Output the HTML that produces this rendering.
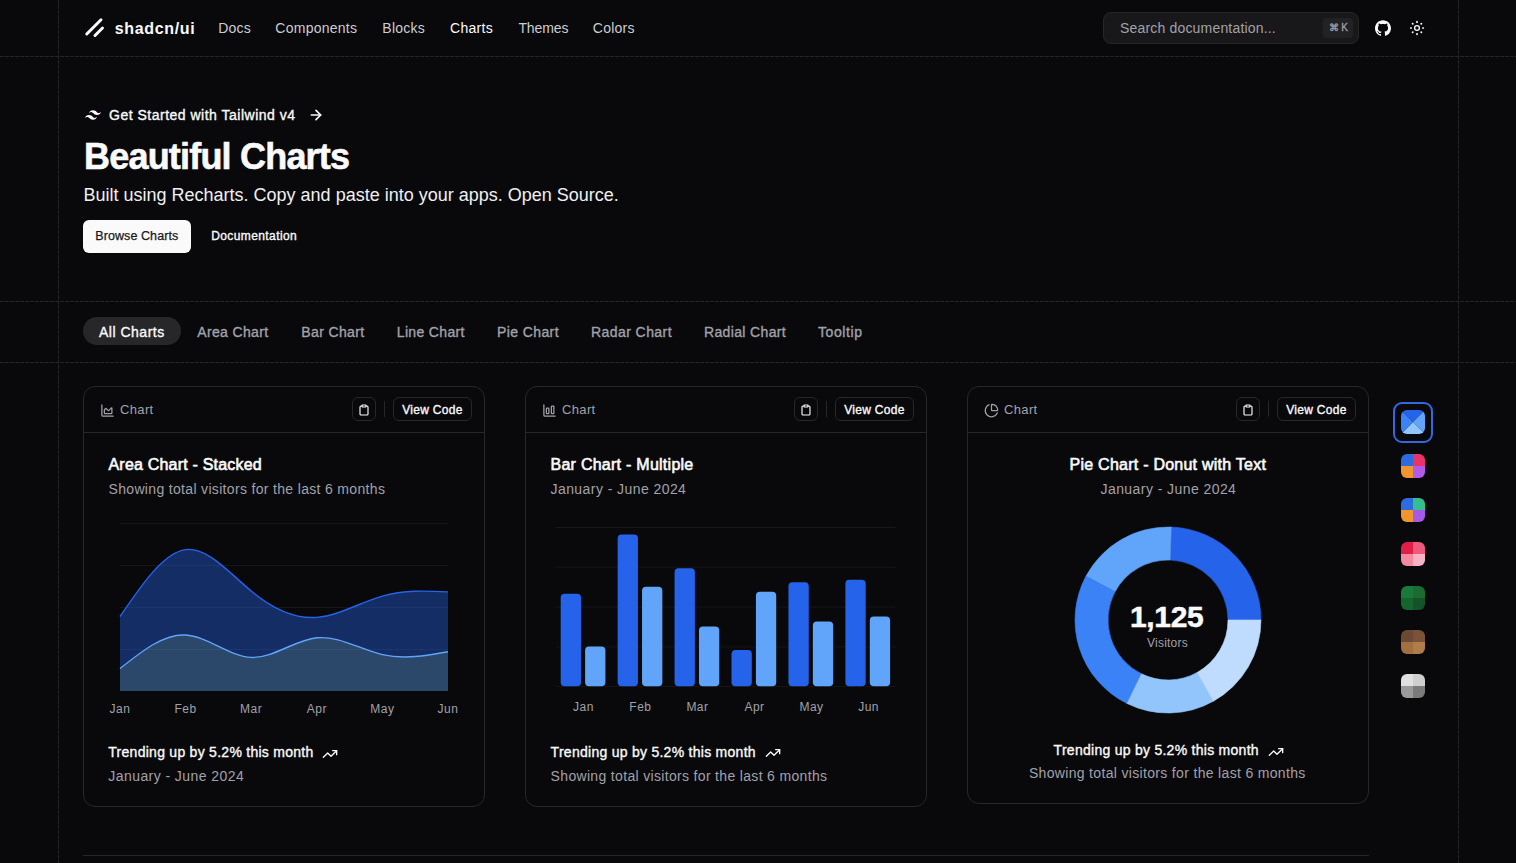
<!DOCTYPE html>
<html><head><meta charset="utf-8"><title>Beautiful Charts</title>
<style>
*{box-sizing:border-box;margin:0;padding:0}
html,body{width:1516px;height:863px;overflow:hidden;background:#09090b}
body{position:relative;font-family:"Liberation Sans",sans-serif;color:#fafafa}
.a{position:absolute;white-space:nowrap;line-height:1}
.med{font-weight:400;-webkit-text-stroke:0.35px currentColor}
.vl{position:absolute;top:0;bottom:0;width:1px;background:repeating-linear-gradient(to bottom,#252528 0 4px,transparent 4px 5px)}
.hl{position:absolute;left:0;right:0;height:1px;background:repeating-linear-gradient(to right,#252528 0 4px,transparent 4px 5px)}
.nav{font-size:14px;color:#cdcdd1}
svg{position:absolute;overflow:visible}
.card{position:absolute;top:386px;width:402px;border:1px solid #27272a;border-radius:12px}
.chd{position:absolute;left:0;right:0;top:45px;height:1px;background:#27272a}
.btn{position:absolute;top:397px;height:24px;border:1px solid #27272a;border-radius:6px}
.ttl{font-size:16px;font-weight:400;-webkit-text-stroke:0.6px #fafafa}
.desc{font-size:14px;color:#a1a1aa}
.axl{width:60px;text-align:center;font-size:12px;color:#a1a1aa;letter-spacing:0.5px}
.ft1{font-size:14px}
</style></head><body>
<div class="vl" style="left:58px"></div><div class="vl" style="left:1458px"></div>
<div class="hl" style="top:56px"></div><div class="hl" style="top:301px"></div><div class="hl" style="top:362px"></div>
<svg style="left:82.5px;top:16.3px" width="24" height="24" viewBox="0 0 256 256"><line x1="208" y1="128" x2="128" y2="208" stroke="#fafafa" stroke-width="32" stroke-linecap="round"/><line x1="192" y1="40" x2="40" y2="192" stroke="#fafafa" stroke-width="32" stroke-linecap="round"/></svg>
<div class="a " style="left:114.8px;top:20.5px;font-size:16px;font-weight:700;letter-spacing:0.65px">shadcn/ui</div>
<div class="a nav" style="left:218.3px;top:20.6px;letter-spacing:0.15px;">Docs</div>
<div class="a nav" style="left:275.3px;top:20.6px;letter-spacing:0.26px;">Components</div>
<div class="a nav" style="left:382.3px;top:20.6px;letter-spacing:0.26px;">Blocks</div>
<div class="a nav" style="left:450px;top:20.6px;letter-spacing:0.3px;color:#fafafa;">Charts</div>
<div class="a nav" style="left:518.4px;top:20.6px;letter-spacing:-0.1px;">Themes</div>
<div class="a nav" style="left:592.8px;top:20.6px;letter-spacing:0.24px;">Colors</div>
<div style="position:absolute;left:1103px;top:12px;width:256px;height:32px;border-radius:8px;background:#18181b;border:1px solid #262629"></div>
<div class="a " style="left:1120px;top:20.8px;font-size:14px;color:#a1a1aa;letter-spacing:0.18px">Search documentation...</div>
<div style="position:absolute;left:1323px;top:18px;width:30px;height:20px;border-radius:4px;background:#222225"></div>
<div class="a " style="left:1328.5px;top:23.3px;font-size:10px;color:#a1a1aa;-webkit-text-stroke:0.3px #a1a1aa">⌘ K</div>
<svg style="left:1375px;top:20px" width="16" height="16" viewBox="0 0 24 24"><path fill="#fafafa" d="M12 .297c-6.63 0-12 5.373-12 12 0 5.303 3.438 9.8 8.205 11.385.6.113.82-.258.82-.577 0-.285-.01-1.04-.015-2.04-3.338.724-4.042-1.61-4.042-1.61C4.422 18.07 3.633 17.7 3.633 17.7c-1.087-.744.084-.729.084-.729 1.205.084 1.838 1.236 1.838 1.236 1.07 1.835 2.809 1.305 3.495.998.108-.776.417-1.305.76-1.605-2.665-.3-5.466-1.332-5.466-5.93 0-1.31.465-2.38 1.235-3.22-.135-.303-.54-1.523.105-3.176 0 0 1.005-.322 3.3 1.23.96-.267 1.98-.399 3-.405 1.02.006 2.04.138 3 .405 2.28-1.552 3.285-1.23 3.285-1.23.645 1.653.24 2.873.12 3.176.765.84 1.23 1.91 1.23 3.22 0 4.61-2.805 5.625-5.475 5.92.42.36.81 1.096.81 2.22 0 1.606-.015 2.896-.015 3.286 0 .315.21.69.825.57C20.565 22.092 24 17.592 24 12.297c0-6.627-5.373-12-12-12"/></svg>
<svg style="left:1409px;top:20px" width="16" height="16" viewBox="0 0 24 24" fill="none" stroke="#fafafa" stroke-width="2" stroke-linecap="round"><circle cx="12" cy="12" r="3.6"/><path d="M12 2.6v.6M12 20.8v.6M5.35 5.35l.4.4M18.25 18.25l.4.4M2.6 12h.6M20.8 12h.6M5.35 18.65l.4-.4M18.25 5.75l.4-.4" stroke-width="2.6"/></svg>
<svg style="left:85px;top:107px" width="16" height="16" viewBox="0 0 24 24"><path fill="#fafafa" d="M12.001,4.8c-3.2,0-5.2,1.6-6,4.8c1.2-1.6,2.6-2.2,4.2-1.8c0.913,0.228,1.565,0.89,2.288,1.624C13.666,10.618,15.027,12,18.001,12c3.2,0,5.2-1.6,6-4.8c-1.2,1.6-2.6,2.2-4.2,1.8c-0.913-0.228-1.565-0.89-2.288-1.624C16.337,6.182,14.976,4.8,12.001,4.8z M6.001,12c-3.2,0-5.2,1.6-6,4.8c1.2-1.6,2.6-2.2,4.2-1.8c0.913,0.228,1.565,0.89,2.288,1.624c1.177,1.194,2.538,2.576,5.512,2.576c3.2,0,5.2-1.6,6-4.8c-1.2,1.6-2.6,2.2-4.2,1.8c-0.913-0.228-1.565-0.89-2.288-1.624C10.337,13.382,8.976,12,6.001,12z"/></svg>
<div class="a med" style="left:109px;top:108.2px;font-size:14px;letter-spacing:0.5px">Get Started with Tailwind v4</div>
<svg style="left:308px;top:107.3px" width="16" height="16" viewBox="0 0 24 24" fill="none" stroke="#fafafa" stroke-width="2.5" stroke-linecap="round" stroke-linejoin="round"><path d="M5 12h14"/><path d="m12 5 7 7-7 7"/></svg>
<div class="a " style="left:84px;top:138.5px;font-size:36px;font-weight:700;letter-spacing:-0.8px;-webkit-text-stroke:0.6px #fafafa">Beautiful Charts</div>
<div class="a " style="left:83.5px;top:185.5px;font-size:18px;color:#f0f0f2">Built using Recharts. Copy and paste into your apps. Open Source.</div>
<div style="position:absolute;left:83px;top:220px;width:108px;height:33px;border-radius:6px;background:#fafafa"></div>
<div class="a med" style="left:95.3px;top:230.3px;font-size:12.5px;color:#18181b;letter-spacing:0.08px;-webkit-text-stroke-width:0.25px">Browse Charts</div>
<div class="a med" style="left:211.2px;top:230.4px;font-size:12px;letter-spacing:0.4px">Documentation</div>
<div style="position:absolute;left:83px;top:317px;width:98px;height:28px;border-radius:14px;background:#27272a"></div>
<div class="a med" style="left:99px;top:324.6px;font-size:14px;color:#fafafa;letter-spacing:0.5px">All Charts</div>
<div class="a med" style="left:197.2px;top:324.6px;font-size:14px;color:#a1a1aa;letter-spacing:0.36px">Area Chart</div>
<div class="a med" style="left:301.3px;top:324.6px;font-size:14px;color:#a1a1aa;letter-spacing:0.37px">Bar Chart</div>
<div class="a med" style="left:396.8px;top:324.6px;font-size:14px;color:#a1a1aa;letter-spacing:0.34px">Line Chart</div>
<div class="a med" style="left:497px;top:324.6px;font-size:14px;color:#a1a1aa;letter-spacing:0.4px">Pie Chart</div>
<div class="a med" style="left:591px;top:324.6px;font-size:14px;color:#a1a1aa;letter-spacing:0.43px">Radar Chart</div>
<div class="a med" style="left:704px;top:324.6px;font-size:14px;color:#a1a1aa;letter-spacing:0.35px">Radial Chart</div>
<div class="a med" style="left:818px;top:324.6px;font-size:14px;color:#a1a1aa;letter-spacing:0.6px">Tooltip</div>
<div class="card" style="left:83px;height:421px"><div class="chd"></div></div>
<svg style="left:99.75px;top:402.75px" width="15" height="15" viewBox="0 0 24 24" fill="none" stroke="#a1a1aa" stroke-width="2" stroke-linecap="round" stroke-linejoin="round"><path d="M3 3v16a2 2 0 0 0 2 2h16"/><path d="M7 11.207a.5.5 0 0 1 .146-.353l2-2a.5.5 0 0 1 .708 0l3.292 3.292a.5.5 0 0 0 .708 0l4.292-4.292a.5.5 0 0 1 .854.353V16a1 1 0 0 1-1 1H8a1 1 0 0 1-1-1z"/></svg>
<div class="a" style="left:120px;top:403.3px;font-size:13px;color:#a1a1aa;letter-spacing:0.35px">Chart</div>
<div class="btn" style="left:352px;width:24px"></div>
<svg style="left:358px;top:404px" width="12" height="12" viewBox="0 0 24 24" fill="none" stroke="#fafafa" stroke-width="2.3" stroke-linecap="round" stroke-linejoin="round"><rect width="8" height="4" x="8" y="2" rx="1" ry="1"/><path d="M16 4h2a2 2 0 0 1 2 2v14a2 2 0 0 1-2 2H6a2 2 0 0 1-2-2V6a2 2 0 0 1 2-2h2"/></svg>
<div style="position:absolute;left:384px;top:401px;width:1px;height:16px;background:#27272a"></div>
<div class="btn" style="left:393px;width:79px"></div>
<div class="a med" style="left:402.3px;top:403.5px;font-size:12px;letter-spacing:0.29px">View Code</div>
<div class="a ttl" style="left:108.5px;top:457.3px;letter-spacing:0.2px">Area Chart - Stacked</div>
<div class="a desc" style="left:108.5px;top:482.2px;letter-spacing:0.33px">Showing total visitors for the last 6 months</div>
<svg style="left:120px;top:523px" width="328" height="168" viewBox="0 0 328 168">
<g stroke="#161619" stroke-width="1"><line x1="0" y1="0.5" x2="328" y2="0.5"/><line x1="0" y1="42.5" x2="328" y2="42.5"/><line x1="0" y1="84.5" x2="328" y2="84.5"/><line x1="0" y1="126.5" x2="328" y2="126.5"/></g>
<path d="M0.00,145.60C21.87,128.13 43.73,110.66 65.60,112.00C87.47,113.34 109.33,133.49 131.20,134.40C153.07,135.31 174.93,116.98 196.80,114.80C218.67,112.62 240.53,126.58 262.40,131.60C284.27,136.62 306.13,132.71 328.00,128.80L328.00,168L0.00,168Z" fill="#60a5fa" fill-opacity="0.4"/>
<path d="M0.00,93.52C21.87,61.50 43.73,29.49 65.60,26.60C87.47,23.71 109.33,49.95 131.20,68.04C153.07,86.13 174.93,96.08 196.80,94.36C218.67,92.64 240.53,79.27 262.40,73.08C284.27,66.89 306.13,67.89 328.00,68.88L328.00,128.80C306.13,132.71 284.27,136.62 262.40,131.60C240.53,126.58 218.67,112.62 196.80,114.80C174.93,116.98 153.07,135.31 131.20,134.40C109.33,133.49 87.47,113.34 65.60,112.00C43.73,110.66 21.87,128.13 0.00,145.60Z" fill="#2563eb" fill-opacity="0.4"/>
<path d="M0.00,145.60C21.87,128.13 43.73,110.66 65.60,112.00C87.47,113.34 109.33,133.49 131.20,134.40C153.07,135.31 174.93,116.98 196.80,114.80C218.67,112.62 240.53,126.58 262.40,131.60C284.27,136.62 306.13,132.71 328.00,128.80" fill="none" stroke="#60a5fa" stroke-width="1.4"/>
<path d="M0.00,93.52C21.87,61.50 43.73,29.49 65.60,26.60C87.47,23.71 109.33,49.95 131.20,68.04C153.07,86.13 174.93,96.08 196.80,94.36C218.67,92.64 240.53,79.27 262.40,73.08C284.27,66.89 306.13,67.89 328.00,68.88" fill="none" stroke="#2563eb" stroke-width="1.4"/>
</svg>
<div class="a axl" style="left:90.0px;top:703px;">Jan</div>
<div class="a axl" style="left:155.6px;top:703px;">Feb</div>
<div class="a axl" style="left:221.2px;top:703px;">Mar</div>
<div class="a axl" style="left:286.79999999999995px;top:703px;">Apr</div>
<div class="a axl" style="left:352.4px;top:703px;">May</div>
<div class="a axl" style="left:418.0px;top:703px;">Jun</div>
<div class="a med ft1" style="left:108.3px;top:745.2px;letter-spacing:0.27px">Trending up by 5.2% this month</div>
<svg style="left:322px;top:746px" width="16" height="16" viewBox="0 0 24 24" fill="none" stroke="#fafafa" stroke-width="2" stroke-linecap="round" stroke-linejoin="round"><polyline points="22 7 13.5 15.5 8.5 10.5 2 17"/><polyline points="16 7 22 7 22 13"/></svg>
<div class="a desc" style="left:108.3px;top:769px;letter-spacing:0.43px">January - June 2024</div>
<div class="card" style="left:525px;height:421px"><div class="chd"></div></div>
<svg style="left:541.75px;top:402.75px" width="15" height="15" viewBox="0 0 24 24" fill="none" stroke="#a1a1aa" stroke-width="2" stroke-linecap="round" stroke-linejoin="round"><path d="M3 3v16a2 2 0 0 0 2 2h16"/><rect x="15" y="5" width="4" height="12" rx="1"/><rect x="7" y="8" width="4" height="9" rx="1"/></svg>
<div class="a" style="left:562px;top:403.3px;font-size:13px;color:#a1a1aa;letter-spacing:0.35px">Chart</div>
<div class="btn" style="left:794px;width:24px"></div>
<svg style="left:800px;top:404px" width="12" height="12" viewBox="0 0 24 24" fill="none" stroke="#fafafa" stroke-width="2.3" stroke-linecap="round" stroke-linejoin="round"><rect width="8" height="4" x="8" y="2" rx="1" ry="1"/><path d="M16 4h2a2 2 0 0 1 2 2v14a2 2 0 0 1-2 2H6a2 2 0 0 1-2-2V6a2 2 0 0 1 2-2h2"/></svg>
<div style="position:absolute;left:826px;top:401px;width:1px;height:16px;background:#27272a"></div>
<div class="btn" style="left:835px;width:79px"></div>
<div class="a med" style="left:844.3px;top:403.5px;font-size:12px;letter-spacing:0.29px">View Code</div>
<div class="a ttl" style="left:550.5px;top:457.3px;letter-spacing:0.26px">Bar Chart - Multiple</div>
<div class="a desc" style="left:550.5px;top:482.2px;letter-spacing:0.43px">January - June 2024</div>
<svg style="left:555.7px;top:526.5px" width="339.6" height="160" viewBox="0 0 339.6 160">
<g stroke="#161619" stroke-width="1"><line x1="0" y1="0.5" x2="339.6" y2="0.5"/><line x1="0" y1="40.3" x2="339.6" y2="40.3"/><line x1="0" y1="80.1" x2="339.6" y2="80.1"/><line x1="0" y1="119.9" x2="339.6" y2="119.9"/><line x1="0" y1="159.5" x2="339.6" y2="159.5"/></g>
<rect x="4.70" y="66.66" width="20.30" height="92.53" rx="4" fill="#2563eb"/>
<rect x="29.10" y="119.40" width="20.30" height="39.80" rx="4" fill="#60a5fa"/>
<rect x="61.64" y="7.46" width="20.30" height="151.74" rx="4" fill="#2563eb"/>
<rect x="86.04" y="59.70" width="20.30" height="99.50" rx="4" fill="#60a5fa"/>
<rect x="118.58" y="41.29" width="20.30" height="117.91" rx="4" fill="#2563eb"/>
<rect x="142.98" y="99.50" width="20.30" height="59.70" rx="4" fill="#60a5fa"/>
<rect x="175.52" y="122.88" width="20.30" height="36.32" rx="4" fill="#2563eb"/>
<rect x="199.92" y="64.67" width="20.30" height="94.52" rx="4" fill="#60a5fa"/>
<rect x="232.46" y="55.22" width="20.30" height="103.98" rx="4" fill="#2563eb"/>
<rect x="256.86" y="94.52" width="20.30" height="64.67" rx="4" fill="#60a5fa"/>
<rect x="289.40" y="52.73" width="20.30" height="106.46" rx="4" fill="#2563eb"/>
<rect x="313.80" y="89.55" width="20.30" height="69.65" rx="4" fill="#60a5fa"/>
</svg>
<div class="a axl" style="left:553.4px;top:701px;">Jan</div>
<div class="a axl" style="left:610.4399999999999px;top:701px;">Feb</div>
<div class="a axl" style="left:667.48px;top:701px;">Mar</div>
<div class="a axl" style="left:724.52px;top:701px;">Apr</div>
<div class="a axl" style="left:781.56px;top:701px;">May</div>
<div class="a axl" style="left:838.5999999999999px;top:701px;">Jun</div>
<div class="a med ft1" style="left:550.6px;top:744.5px;letter-spacing:0.27px">Trending up by 5.2% this month</div>
<svg style="left:764.6px;top:745px" width="16" height="16" viewBox="0 0 24 24" fill="none" stroke="#fafafa" stroke-width="2" stroke-linecap="round" stroke-linejoin="round"><polyline points="22 7 13.5 15.5 8.5 10.5 2 17"/><polyline points="16 7 22 7 22 13"/></svg>
<div class="a desc" style="left:550.6px;top:768.6px;letter-spacing:0.33px">Showing total visitors for the last 6 months</div>
<div class="card" style="left:967px;height:418px"><div class="chd"></div></div>
<svg style="left:983.75px;top:402.75px" width="15" height="15" viewBox="0 0 24 24" fill="none" stroke="#a1a1aa" stroke-width="2" stroke-linecap="round" stroke-linejoin="round"><path d="M21 12c.552 0 1.005-.449.95-.998a10 10 0 0 0-8.953-8.951c-.55-.055-.998.398-.998.95v8a1 1 0 0 0 1 1z"/><path d="M21.21 15.89A10 10 0 1 1 8 2.83"/></svg>
<div class="a" style="left:1004px;top:403.3px;font-size:13px;color:#a1a1aa;letter-spacing:0.35px">Chart</div>
<div class="btn" style="left:1236px;width:24px"></div>
<svg style="left:1242px;top:404px" width="12" height="12" viewBox="0 0 24 24" fill="none" stroke="#fafafa" stroke-width="2.3" stroke-linecap="round" stroke-linejoin="round"><rect width="8" height="4" x="8" y="2" rx="1" ry="1"/><path d="M16 4h2a2 2 0 0 1 2 2v14a2 2 0 0 1-2 2H6a2 2 0 0 1-2-2V6a2 2 0 0 1 2-2h2"/></svg>
<div style="position:absolute;left:1268px;top:401px;width:1px;height:16px;background:#27272a"></div>
<div class="btn" style="left:1277px;width:79px"></div>
<div class="a med" style="left:1286.3px;top:403.5px;font-size:12px;letter-spacing:0.29px">View Code</div>
<div class="a ttl" style="left:1069.6px;top:457.3px;letter-spacing:0.24px">Pie Chart - Donut with Text</div>
<div class="a desc" style="left:1100.5px;top:482.2px;letter-spacing:0.43px">January - June 2024</div>
<svg style="left:1075px;top:527px" width="186" height="186" viewBox="0 0 186 186"><path d="M186.00,93.00A93,93 0 0 0 96.25,0.06L95.09,33.04A60,60 0 0 1 153.00,93.00Z" fill="#2563eb" stroke="#2563eb" stroke-width="0.6"/>
<path d="M96.25,0.06A93,93 0 0 0 10.89,49.34L40.02,64.83A60,60 0 0 1 95.09,33.04Z" fill="#60a5fa" stroke="#60a5fa" stroke-width="0.6"/>
<path d="M10.89,49.34A93,93 0 0 0 52.00,176.47L66.55,146.85A60,60 0 0 1 40.02,64.83Z" fill="#3b82f6" stroke="#3b82f6" stroke-width="0.6"/>
<path d="M52.00,176.47A93,93 0 0 0 138.37,174.18L122.27,145.38A60,60 0 0 1 66.55,146.85Z" fill="#93c5fd" stroke="#93c5fd" stroke-width="0.6"/>
<path d="M138.37,174.18A93,93 0 0 0 186.00,93.00L153.00,93.00A60,60 0 0 1 122.27,145.38Z" fill="#bfdbfe" stroke="#bfdbfe" stroke-width="0.6"/></svg>
<div class="a " style="left:1130px;top:602.3px;font-size:30px;font-weight:700;letter-spacing:-0.35px;-webkit-text-stroke:0.5px #fafafa">1,125</div>
<div class="a " style="left:1147px;top:637px;font-size:12px;color:#a1a1aa;letter-spacing:0.23px">Visitors</div>
<div class="a med ft1" style="left:1053.6px;top:743px;letter-spacing:0.27px">Trending up by 5.2% this month</div>
<svg style="left:1267.6px;top:743.5px" width="16" height="16" viewBox="0 0 24 24" fill="none" stroke="#fafafa" stroke-width="2" stroke-linecap="round" stroke-linejoin="round"><polyline points="22 7 13.5 15.5 8.5 10.5 2 17"/><polyline points="16 7 22 7 22 13"/></svg>
<div class="a desc" style="left:1028.9px;top:765.6px;letter-spacing:0.33px">Showing total visitors for the last 6 months</div>
<div style="position:absolute;left:1393px;top:402px;width:40px;height:41px;border-radius:9px;border:2px solid #3567e4"></div>
<svg style="left:1401px;top:410px" width="24" height="24" viewBox="0 0 24 24"><defs><clipPath id="rc"><rect width="24" height="24" rx="6"/></clipPath></defs><g clip-path="url(#rc)"><path d="M0 0H24L12 12Z" fill="#2563eb"/><path d="M24 0V24L12 12Z" fill="#60a5fa"/><path d="M0 24H24L12 12Z" fill="#93c5fd"/><path d="M0 0V24L12 12Z" fill="#3b82f6"/></g></svg>
<svg style="left:1401px;top:454px" width="24" height="24" viewBox="0 0 24 24"><g clip-path="url(#rc)"><rect width="12" height="12" fill="#2f6be0"/><rect x="12" width="12" height="12" fill="#e8336b"/><rect y="12" width="12" height="12" fill="#f0952f"/><rect x="12" y="12" width="12" height="12" fill="#b35be8"/></g></svg>
<svg style="left:1401px;top:498px" width="24" height="24" viewBox="0 0 24 24"><g clip-path="url(#rc)"><rect width="12" height="12" fill="#2f6be0"/><rect x="12" width="12" height="12" fill="#34c08e"/><rect y="12" width="12" height="12" fill="#f0952f"/><rect x="12" y="12" width="12" height="12" fill="#a659e8"/></g></svg>
<svg style="left:1401px;top:542px" width="24" height="24" viewBox="0 0 24 24"><g clip-path="url(#rc)"><rect width="12" height="12" fill="#e11d48"/><rect x="12" width="12" height="12" fill="#ee5a7c"/><rect y="12" width="12" height="12" fill="#f28ba0"/><rect x="12" y="12" width="12" height="12" fill="#f7b3c2"/></g></svg>
<svg style="left:1401px;top:586px" width="24" height="24" viewBox="0 0 24 24"><g clip-path="url(#rc)"><rect width="12" height="12" fill="#1a7a3a"/><rect x="12" width="12" height="12" fill="#1b6b33"/><rect y="12" width="12" height="12" fill="#16642e"/><rect x="12" y="12" width="12" height="12" fill="#145229"/></g></svg>
<svg style="left:1401px;top:630px" width="24" height="24" viewBox="0 0 24 24"><g clip-path="url(#rc)"><rect width="12" height="12" fill="#6b4a35"/><rect x="12" width="12" height="12" fill="#7a5238"/><rect y="12" width="12" height="12" fill="#a36f40"/><rect x="12" y="12" width="12" height="12" fill="#b07c4a"/></g></svg>
<svg style="left:1401px;top:674px" width="24" height="24" viewBox="0 0 24 24"><g clip-path="url(#rc)"><rect width="12" height="12" fill="#e0e0e0"/><rect x="12" width="12" height="12" fill="#cfcfcf"/><rect y="12" width="12" height="12" fill="#9a9a9a"/><rect x="12" y="12" width="12" height="12" fill="#7a7a7a"/></g></svg>
<div style="position:absolute;left:83px;top:855px;width:1286px;height:1px;background:#27272a"></div>
</body></html>
